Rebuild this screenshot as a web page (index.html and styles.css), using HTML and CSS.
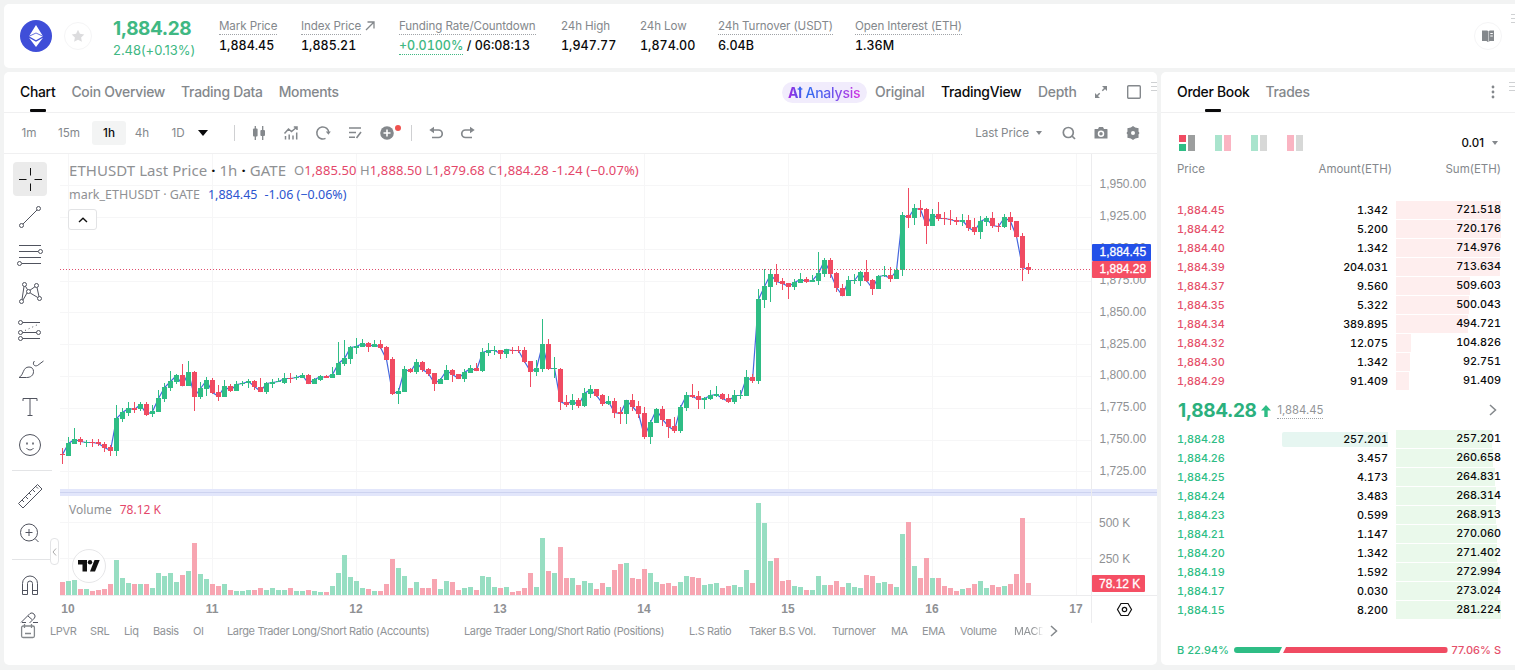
FILE: index.html
```html
<!DOCTYPE html>
<html lang="en">
<head>
  <meta charset="UTF-8">
  <meta name="viewport" content="width=device-width, initial-scale=1.0">
  <title>ETHUSDT Futures</title>
  <link rel="stylesheet" href="styles.css">
</head>
<body>

  <!-- Ticker -->
  <header class="ticker">
    <svg class="coin" viewBox="0 0 32 32"><circle cx="16" cy="16" r="16" fill="#3f4ed8"/><path d="M16 5 9 16.3l7 3.9 7-3.9zM9 17.8 16 27l7-9.2-7 3.9z" fill="#fff"/><path d="M9 16.3 16 13l7 3.3" fill="none" stroke="#3f4ed8" stroke-width=".8"/></svg>
    <div class="fav"><svg width="14" height="14" viewBox="0 0 14 14"><path d="m7 .8 1.9 4 4.4.6-3.200 3 .8 4.400L7 10.700l-3.900 2.100.8-4.400-3.200-3 4.400-.6z" fill="#dcdcde"/></svg></div>
    <div class="last">
      <div class="last-price">1,884.28</div>
      <div class="last-change">2.48(+0.13%)</div>
    </div>
    <div class="stats">
      <div class="stat"><span class="label hint">Mark Price</span><b>1,884.45</b></div>
      <div class="stat"><span class="label"><span class="hint">Index Price</span><svg class="arrow" width="10" height="10" viewBox="0 0 10 10"><path d="M1 9 9 1M2.500 1H9v6.500" fill="none" stroke="#84888c" stroke-width="1.300"/></svg></span><b>1,885.21</b></div>
      <div class="stat"><span class="label hint">Funding Rate/Countdown</span><b><span class="rate">+0.0100%</span> / 06:08:13</b></div>
      <div class="stat"><span class="label">24h High</span><b>1,947.77</b></div>
      <div class="stat"><span class="label">24h Low</span><b>1,874.00</b></div>
      <div class="stat"><span class="label hint">24h Turnover (USDT)</span><b>6.04B</b></div>
      <div class="stat"><span class="label hint">Open Interest (ETH)</span><b>1.36M</b></div>
    </div>
    <div class="guide"><svg width="14" height="12" viewBox="0 0 14 12"><path d="M1 .5h5q1 0 1 1V12q-.5-1-2-1H1zM8 1.500q0-1 1-1h4V11H9q-1 0-1 1z" fill="#84888c"/><path d="M7 1v11" stroke="#84888c"/><path d="M9.300 3.500h2.500M9.300 6h2.500" stroke="#fff"/></svg></div>
    <i class="grip"></i>
  </header>

  <main class="workspace">
    <!-- Chart -->
    <section class="card chart-card">
      <nav class="tabs">
        <a class="tab active">Chart</a>
        <a class="tab">Coin Overview</a>
        <a class="tab">Trading Data</a>
        <a class="tab">Moments</a>
        <div class="views">
          <a class="analysis"><span><b>Ai</b> Analysis</span><svg class="spark" width="6" height="6" viewBox="0 0 6 6"><path d="M3 0 3.900 2.100 6 3 3.900 3.900 3 6 2.100 3.900 0 3 2.100 2.100z" fill="#3a68ee"/></svg></a>
          <a class="tab">Original</a>
          <a class="tab on">TradingView</a>
          <a class="tab">Depth</a>
          <svg class="expand" width="14" height="14" viewBox="0 0 14 14"><path d="M8.300 5.700l3-3M5.700 8.300l-3 3" stroke="#84888c" stroke-width="1.500"/><path d="M8 1h5v5zM6 13H1V8z" fill="#84888c"/></svg>
          <svg class="square" width="14" height="14" viewBox="0 0 14 14"><rect x=".7" y=".7" width="12.600" height="12.600" rx="1" fill="none" stroke="#84888c" stroke-width="1.400"/></svg>
        </div>
        <i class="grip"></i>
      </nav>

      <div class="toolbar">
        <div class="intervals">
          <span>1m</span><span>15m</span><span class="current">1h</span><span>4h</span><span>1D</span>
          <i class="caret"></i>
        </div>
        <i class="bar"></i>
        <div class="tool-icons">
          <svg viewBox="0 0 16 16" fill="#84888c"><path d="M4.300 1v14M11.700 1v14" stroke="#84888c" stroke-width="1.300"/><rect x="2" y="3.500" width="4.600" height="8" rx="1"/><rect x="9.400" y="5" width="4.600" height="6" rx="1"/></svg>
          <svg viewBox="0 0 16 16" fill="none" stroke="#84888c" stroke-width="1.500"><path d="M1.500 8.500 5.500 4l3 2.500L14 2M10.800 2H14v3M2.500 11v3.500M6.200 9.500v5M10 10.500v4M13.700 7.500v7"/></svg>
          <svg viewBox="0 0 16 16" fill="none" stroke="#84888c" stroke-width="1.500"><path d="M13.800 8A6 6 0 1 0 10.500 13.300"/><path d="M10.800 6.500h5l-2.400 3.300z" fill="#84888c" stroke="none"/></svg>
          <svg viewBox="0 0 16 16" fill="none" stroke="#84888c" stroke-width="1.600"><path d="M2 3h12M2 7.500h7M2 12.200h6M9.500 13l4.500-6"/></svg>
          <span class="add"><svg viewBox="0 0 16 16"><circle cx="8" cy="8" r="6.800" fill="#84888c"/><path d="M8 4.500v7M4.500 8h7" stroke="#fff" stroke-width="1.600"/></svg></span>
        </div>
        <i class="bar"></i>
        <div class="tool-icons history">
          <svg viewBox="0 0 16 16" fill="none" stroke="#84888c" stroke-width="1.700"><path d="M3 5h7.500a3.700 3.700 0 0 1 0 7.500H4"/><path d="M6 1.800v6.400L1.300 5z" fill="#84888c" stroke="none"/></svg>
          <svg viewBox="0 0 16 16" fill="none" stroke="#84888c" stroke-width="1.700"><path d="M13 5H5.500a3.700 3.700 0 0 0 0 7.500H12"/><path d="M10 1.800v6.400L14.700 5z" fill="#84888c" stroke="none"/></svg>
        </div>
        <div class="toolbar-right">
          <span>Last Price</span><i class="caret small"></i>
          <svg viewBox="0 0 16 16" fill="none" stroke="#84888c" stroke-width="1.700"><circle cx="7.300" cy="7.500" r="5"/><path d="m11 11 3 3"/></svg>
          <svg viewBox="0 0 16 16"><path d="M2 4h3l1-2h4l1 2h3q.5 0 .5.500v9H1.500v-9Q1.500 4 2 4z" fill="#84888c"/><circle cx="8" cy="8.700" r="2.500" fill="#84888c" stroke="#fff" stroke-width="1.500"/></svg>
          <svg viewBox="0 0 16 16"><path d="M8 1 10.200 2.600 13.600 3.300 13.500 6.500 14.500 8 13.500 9.500 13.600 12.700 10.200 13.400 8 15 5.800 13.400 2.400 12.700 2.500 9.500 1.500 8 2.500 6.500 2.400 3.300 5.800 2.600z" fill="#84888c"/><circle cx="8" cy="8" r="2" fill="#fff"/></svg>
        </div>
      </div>

      <div class="chart-body">
        <!-- Drawing tools -->
        <aside class="draw-tools">
          <span class="tool selected"><svg viewBox="0 0 28 28"><path d="M14.500 3v7.500M14.500 18.500V26M3 14.500h7.500M18.500 14.500H26" stroke="#111"/></svg></span>
          <span class="tool"><svg viewBox="0 0 28 28"><circle cx="5.500" cy="22.500" r="2"/><circle cx="22.500" cy="5.500" r="2"/><path d="M7 21 21 7"/></svg></span>
          <span class="tool"><svg viewBox="0 0 28 28"><path d="M3 4.500h22M3 10.500h19M3 16.500h22M6 22.500h19"/><circle cx="24.500" cy="10.500" r="2"/><circle cx="3.500" cy="22.500" r="2"/></svg></span>
          <span class="tool"><svg viewBox="0 0 28 28"><circle cx="5.500" cy="22.500" r="2"/><circle cx="8.500" cy="5.500" r="2"/><circle cx="12.500" cy="12.500" r="2"/><circle cx="20.500" cy="6.500" r="2"/><circle cx="23.500" cy="19.500" r="2"/><path d="m6 20.500 2-13M9.500 7.300l2 3.400M14 11.200l5-3.500M21 8.500l2 9M7 21l4-7M14.200 14l7.600 4.500"/></svg></span>
          <span class="tool"><svg viewBox="0 0 28 28"><circle cx="4.500" cy="5.500" r="2"/><circle cx="4.500" cy="15.500" r="2"/><circle cx="22.500" cy="15.500" r="2"/><circle cx="4.500" cy="21.500" r="2"/><path d="M6.500 5.500H24M6.500 15.500h14M6.500 21.500H24"/><path d="M9 13.500 23 7" stroke-dasharray="1 3"/></svg></span>
          <span class="tool"><svg viewBox="0 0 28 28"><path d="M3 22.500c5-2.500 3.500-10.500 10-10.500 3 0 4.500 2 4.500 4.500 0 4-3 6-7 6zM18.500 6c-2.500 2.500-.5 6 3 4.500L27.500 6"/></svg></span>
          <span class="tool"><svg viewBox="0 0 28 28"><path d="M7 8V5.500h14V8M14 5.500v17M11.500 22.500h5"/></svg></span>
          <span class="tool"><svg viewBox="0 0 28 28"><circle cx="14" cy="14" r="10.500"/><path d="M10.500 17q1 2 3.500 2t3.500-2"/><path d="M11 11.500v2M17 11.500v2" stroke-width="1.500"/></svg></span>
          <i class="rule"></i>
          <span class="tool"><svg viewBox="0 0 28 28"><path d="m2.500 21.500 19-19 4.500 4.500-19 19zM6 18l2 2M9.500 14.500l2.500 2.500M13 11l2 2M16.500 7.500 19 10M20 4.500l2 2"/></svg></span>
          <span class="tool"><svg viewBox="0 0 28 28"><circle cx="13" cy="12.500" r="8.500"/><path d="m19 18.500 3.500 3.500M13 9v7M9.500 12.500h7"/></svg></span>
          <i class="rule"></i>
          <span class="tool"><svg viewBox="0 0 28 28"><path d="M6.500 23.500V12.500a7.500 7.500 0 0 1 15 0v11h-5v-11a2.500 2.500 0 0 0-5 0v11zM6.500 19.500h5M16.500 19.500h5"/></svg></span>
          <span class="tool"><svg viewBox="0 0 28 28"><path d="m5 13.500 9-9q2-1.500 4 .5t.5 4L13 14.500M12 7l4 3.500M6 13.500h4M17 13.500h5"/></svg></span>
        </aside>

        <div class="plot">
          <svg id="chart" width="1097" height="469"></svg>
          <div class="legend">
            <div class="legend-main"><span class="symbol">ETHUSDT Last Price<i>·</i>1h<i>·</i>GATE</span><span class="ohlc">O<em>1,885.50</em> H<em>1,888.50</em> L<em>1,879.68</em> C<em>1,884.28</em> <em>-1.24 (−0.07%)</em></span></div>
            <div class="legend-sub">mark_ETHUSDT · GATE<em>1,884.45</em><em>-1.06 (−0.06%)</em></div>
            <span class="collapse"><svg width="12" height="12" viewBox="0 0 12 12"><path d="m2 8 4-3.700L10 8" fill="none" stroke="#111" stroke-width="1.400"/></svg></span>
          </div>
          <div class="legend-volume">Volume<em>78.12 K</em></div>
          <div class="tv-logo"><svg width="22" height="12" viewBox="0 0 22 12" fill="#111"><path d="M0 0h9v11.500H4.500V4.500H0z"/><circle cx="12" cy="2.300" r="2.200"/><path d="M16.500 0h5.200L17 11.500h-5z"/></svg></div>
          <span class="side-toggle"><svg width="5" height="8" viewBox="0 0 5 8"><path d="M4 .5 1 4l3 3.500" fill="none" stroke="#aaa"/></svg></span>
        </div>
      </div>

      <footer class="indicators">
        <svg class="calendar" width="16" height="16" viewBox="0 0 16 16" fill="none" stroke="#84888c" stroke-width="1.300"><rect x="1.600" y="3" width="12.800" height="11.500" rx="1.500"/><path d="M4.500 1v4M11.500 1v4M5 10.500h6"/></svg>
        <span>LPVR</span><span>SRL</span><span>Liq</span><span>Basis</span><span>OI</span>
        <span>Large Trader Long/Short Ratio (Accounts)</span>
        <span>Large Trader Long/Short Ratio (Positions)</span>
        <span>L.S Ratio</span><span>Taker B.S Vol.</span><span>Turnover</span><span>MA</span><span>EMA</span><span>Volume</span><span class="fade">MACD</span>
        <svg width="8" height="12" viewBox="0 0 8 12"><path d="m1 1 5.500 5L1 11" fill="none" stroke="#84888c" stroke-width="1.500"/></svg>
      </footer>
    </section>

    <!-- Order book -->
    <section class="card book">
      <nav class="tabs">
        <a class="tab active">Order Book</a>
        <a class="tab">Trades</a>
        <svg class="more" width="4" height="14" viewBox="0 0 4 14" fill="#84888c"><circle cx="2" cy="2" r="1.400"/><circle cx="2" cy="7" r="1.400"/><circle cx="2" cy="12" r="1.400"/></svg>
        <i class="grip"></i>
      </nav>
      <div class="book-modes">
        <i class="mode both"></i><i class="mode split"></i><i class="mode bids-only"></i><i class="mode asks-only"></i>
        <span class="step">0.01<i class="caret small"></i></span>
      </div>
      <div class="book-head"><span>Price</span><span>Amount(ETH)</span><span>Sum(ETH)</span></div>
      <div class="rows asks" id="asks"></div>
      <div class="mid">
        <strong>1,884.28</strong>
        <svg width="10" height="12" viewBox="0 0 10 12"><path d="M5 0 10 5.500H6.700V12H3.300V5.500H0z" fill="#2ebd85"/></svg>
        <span>1,884.45</span>
        <svg class="go" width="8" height="12" viewBox="0 0 8 12"><path d="m1 1 5.500 5L1 11" fill="none" stroke="#84888c" stroke-width="1.500"/></svg>
      </div>
      <div class="rows bids" id="bids"></div>
      <div class="ratio"><span class="up">B 22.94%</span><i class="buy"></i><i class="sell"></i><span class="down">77.06% S</span></div>
    </section>
  </main>

  <script src="chart.js"></script>
</body>
</html>
```
FILE: styles.css
```css
* {
  box-sizing: border-box;
}

body {
  margin: 0;
  height: 670px;
  overflow: hidden;
  background: #f2f3f3;
  color: #0a0a0b;
  font-family: Inter, "Liberation Sans", sans-serif;
  font-size: 12px;
}

i, em {
  font-style: normal;
}

svg {
  display: block;
  flex: none;
}

/* Ticker */
.ticker {
  position: relative;
  display: flex;
  align-items: center;
  height: 64px;
  margin: 4px 0 4px 4px;
  padding-left: 16px;
  background: #fff;
  border-radius: 5px 0 0 5px;
}

.coin {
  width: 32px;
  height: 32px;
}

.fav, .guide {
  display: flex;
  align-items: center;
  justify-content: center;
  width: 28px;
  height: 28px;
  border: 1px solid #f5f5f6;
  border-radius: 50%;
}

.fav {
  margin-left: 12px;
}

.guide {
  margin-left: auto;
  margin-right: 13px;
}

.last {
  width: 106px;
  margin: 5px 0 0 21px;
  color: #40b883;
}

.last-price {
  font-size: 19px;
  font-weight: 700;
  line-height: 22px;
  letter-spacing: -0.42px;
}

.last-change {
  font-size: 13px;
  line-height: 20px;
  letter-spacing: -0.05px;
}

.stats {
  display: grid;
  grid-template-columns: 82px 98px 162px 79px 78px 137px 120px;
}

.stat {
  display: flex;
  flex-direction: column;
  align-items: flex-start;
  height: 40px;
}

.stat .label {
  display: flex;
  height: 19px;
  color: #84888c;
  font-size: 11.600px;
  line-height: 20px;
  letter-spacing: -0.1px;
  white-space: nowrap;
}

.stat .hint {
  height: 19px;
  border-bottom: 1px dotted #a0a3a7;
}

.stat b {
  font-size: 12.500px;
  font-weight: 500;
  line-height: 22px;
  font-variant-numeric: tabular-nums;
  white-space: nowrap;
}

.rate {
  display: inline-block;
  height: 19px;
  line-height: 20px;
  color: #40b883;
  border-bottom: 1px dotted #40b883;
}

.arrow {
  margin: 5px 0 0 4px;
}

.grip {
  position: absolute;
  top: 10px;
  right: 0;
  width: 6px;
  height: 10px;
  background: repeating-linear-gradient(#cfd1d3 0 1px, transparent 1px 4px);
}

.ticker .grip {
  width: 4px;
}

/* Cards */
.workspace {
  display: grid;
  grid-template-columns: 1153px 354px;
  gap: 4px;
  margin-left: 4px;
}

.card {
  height: 593px;
  overflow: hidden;
  background: #fff;
  border-radius: 5px;
}

.book {
  border-radius: 5px 0 0 5px;
}

.tabs {
  position: relative;
  display: flex;
  align-items: center;
  gap: 16px;
  height: 41px;
  padding-left: 16px;
  border-bottom: 1px solid #f0f0f1;
}

.tab {
  position: relative;
  color: #84888c;
  font-size: 13.900px;
  font-weight: 500;
  line-height: 18px;
  letter-spacing: -0.27px;
  white-space: nowrap;
}

.tab.active, .tab.on {
  color: #0a0a0b;
}

.tab.active::after {
  content: "";
  position: absolute;
  left: 50%;
  bottom: -11px;
  width: 16px;
  height: 3px;
  margin-left: -8px;
  border-radius: 1px;
  background: #0a0a0b;
}

.views {
  display: grid;
  grid-template-columns: 93px 66px 97px 56px 33px 14px;
  align-items: center;
  margin-left: auto;
  margin-right: 16px;
}

.analysis {
  position: relative;
  width: 85px;
  height: 21px;
  padding-left: 6px;
  border-radius: 11px;
  background: #f1ecfc;
  font-size: 14px;
  font-weight: 500;
  line-height: 21px;
  letter-spacing: -0.2px;
  white-space: nowrap;
}

.analysis span {
  background: linear-gradient(90deg, #a426e0, #2f6bf0 25%, #5a5cee 55%, #d42fe0);
  -webkit-background-clip: text;
  background-clip: text;
  color: transparent;
}

.spark {
  position: absolute;
  top: 4px;
  left: 15px;
}

/* Toolbar */
.toolbar {
  display: flex;
  align-items: center;
  height: 41px;
  border-bottom: 1px solid #f0f0f1;
  color: #84888c;
  font-size: 11.700px;
}

.intervals {
  display: grid;
  grid-template-columns: 40px 40px 33px 36px 37px 10px;
  align-items: center;
  width: 219px;
  margin-left: 8px;
}

.intervals span {
  width: 34px;
  line-height: 24px;
  text-align: center;
}

.intervals .current {
  border-radius: 3px;
  background: #f3f4f4;
  color: #0a0a0b;
  font-weight: 500;
}

.caret {
  width: 0;
  border: 5px solid transparent;
  border-top: 6px solid #0a0a0b;
  border-bottom: 0;
}

.caret.small {
  border-width: 4px 3px 0;
  border-top-color: #84888c;
}

.bar {
  width: 1px;
  height: 16px;
  margin-left: 3px;
  background: #cfd0d2;
}

.tool-icons {
  display: flex;
  gap: 16px;
  width: 173px;
  padding-left: 16px;
}

.tool-icons svg, .toolbar-right svg {
  width: 16px;
  height: 16px;
}

.add {
  position: relative;
}

.add::after {
  content: "";
  position: absolute;
  top: 0;
  right: -6px;
  width: 6px;
  height: 6px;
  border-radius: 50%;
  background: #f0524f;
}

.tool-icons.history {
  width: auto;
}

.toolbar-right {
  display: flex;
  align-items: center;
  gap: 16px;
  margin-left: auto;
  margin-right: 16px;
  letter-spacing: -0.1px;
}

.toolbar-right .caret {
  margin: 0 3px 0 -9px;
}

/* Chart */
.chart-body {
  display: flex;
  height: 469px;
}

.draw-tools {
  width: 56px;
  padding-top: 6px;
  overflow: hidden;
}

.tool {
  display: flex;
  align-items: center;
  justify-content: center;
  width: 34px;
  height: 34px;
  margin: 2px 9px 4px;
  border-radius: 4px;
}

.tool svg {
  width: 28px;
  height: 28px;
  fill: none;
  stroke: #50535e;
}

.tool.selected {
  background: #ebebeb;
}

.rule {
  display: block;
  height: 1px;
  margin: 8px;
  background: #e3e4e6;
}

.plot {
  position: relative;
  width: 1097px;
  font-family: "Noto Sans", "Liberation Sans", sans-serif;
  color: #8f9194;
}

.legend {
  position: absolute;
  top: 5px;
  left: 8px;
}

.legend-main {
  display: flex;
  align-items: center;
  height: 22px;
  padding-left: 1px;
  white-space: nowrap;
}

.symbol {
  width: 225px;
  font-size: 15px;
  letter-spacing: 0.05px;
}

.symbol i {
  margin: 0 4px;
  color: #111;
  font-weight: 700;
}

.ohlc {
  font-size: 13px;
  letter-spacing: 0.09px;
}

.ohlc em, .legend-volume em {
  color: #e4476a;
}

.legend-sub {
  margin-top: 3px;
  padding-left: 1px;
  font-size: 12.500px;
  line-height: 22px;
  white-space: nowrap;
}

.legend-sub em {
  margin-left: 8px;
  color: #2b55cf;
}

.legend-sub em + em {
  margin-left: 7px;
}

.collapse {
  display: flex;
  align-items: center;
  justify-content: center;
  width: 29px;
  height: 21px;
  margin-top: 3px;
  border: 1px solid #e2e3e5;
  border-radius: 3px;
  background: #fff;
}

.legend-volume {
  position: absolute;
  top: 346px;
  left: 9px;
  font-size: 12px;
  line-height: 20px;
}

.legend-volume em {
  margin-left: 8px;
}

.tv-logo {
  position: absolute;
  top: 395px;
  left: 12px;
  display: flex;
  align-items: center;
  justify-content: center;
  width: 34px;
  height: 34px;
  border: 1px solid #e6e6e8;
  border-radius: 50%;
  background: #fff;
}

.side-toggle {
  position: absolute;
  top: 384px;
  left: -10px;
  display: flex;
  align-items: center;
  justify-content: center;
  width: 9px;
  height: 27px;
  border: 1px solid #e3e4e6;
  border-radius: 4px;
  background: #fff;
}

.grid {
  stroke: #f6f6f7;
}

.axis-line {
  stroke: #ececee;
}

.axis-text {
  fill: #8f9194;
  font: 12px "Liberation Sans", sans-serif;
}

.day {
  font-weight: 700;
  text-anchor: middle;
}

.tag-text {
  fill: #fff;
  font: 12px "Liberation Sans", sans-serif;
  stroke: #fff;
  stroke-width: 0.3px;
}

.up-fill { fill: #2ebd85; }
.down-fill { fill: #f04b62; }
.up-vol { fill: #97dec2; }
.down-vol { fill: #f7a5b1; }

.mark-line {
  fill: none;
  stroke: #4667dd;
  stroke-width: 1.200;
}

.last-line {
  stroke: #e0506f;
  stroke-dasharray: 1 2;
}

/* Indicators */
.indicators {
  display: grid;
  grid-template-columns: 30px 40px 34px 29px 40px 34px 237px 225px 60px 83px 59px 31px 38px 54px 36px 8px;
  align-items: center;
  height: 17px;
  margin-top: -1px;
  padding-left: 16px;
  color: #919497;
  font-size: 11px;
  letter-spacing: -0.37px;
  white-space: nowrap;
}

.fade {
  width: 32px;
  overflow: hidden;
  -webkit-mask-image: linear-gradient(90deg, #000 60%, transparent 92%);
  mask-image: linear-gradient(90deg, #000 60%, transparent 92%);
}

/* Order book */
.more {
  margin-left: auto;
  margin-right: 20px;
}

.book-modes {
  display: flex;
  align-items: center;
  gap: 20px;
  height: 20px;
  margin-top: 20px;
  padding: 0 17px 0 18px;
}

.mode {
  width: 16px;
  height: 16px;
}

.both {
  background:
    linear-gradient(#f04b62, #f04b62) 0 0 / 7px 7px no-repeat,
    linear-gradient(#2ebd85, #2ebd85) 0 9px / 7px 7px no-repeat,
    linear-gradient(#9c9e9e, #9c9e9e) 9px 0 / 7px 16px no-repeat;
}

.split { background: linear-gradient(90deg, #a9e4cd 0 7px, #fff 7px 9px, #fab4c2 9px); }
.bids-only { background: linear-gradient(90deg, #a9e4cd 0 7px, #fff 7px 9px, #d7d8d7 9px); }
.asks-only { background: linear-gradient(90deg, #fab4c2 0 7px, #fff 7px 9px, #d7d8d7 9px); }

.step {
  display: flex;
  align-items: center;
  gap: 8px;
  margin-left: auto;
  font-size: 11.500px;
  font-weight: 500;
}

.book-head {
  display: grid;
  grid-template-columns: 107px 108px 109px;
  height: 32px;
  padding-left: 16px;
  color: #84888c;
  font-size: 11.500px;
  line-height: 32px;
}

.book-head span + span {
  text-align: right;
}

.rows {
  padding-left: 16px;
  font-variant-numeric: tabular-nums;
}

.asks {
  margin-top: 16px;
  color: #e5506b;
}

.bids {
  color: #2ebd85;
}

.row {
  display: grid;
  grid-template-columns: 105px 106px 8px 105px;
  height: 19px;
  font-size: 10.800px;
  font-weight: 500;
  line-height: 19px;
}

.amount, .sum {
  color: #0a0a0b;
  text-align: right;
}

.amount {
  height: 15px;
  margin-top: 2px;
  line-height: 15px;
}

.amount.flash {
  border-radius: 2px 0 0 2px;
  background: #e6f6f1;
}

.sum {
  position: relative;
  grid-column: 4;
  height: 18px;
  line-height: 17px;
}

.sum i {
  position: absolute;
  top: 0;
  left: 0;
  height: 18px;
  background: #feeeee;
}

.bids .sum i {
  background: #eaf9eb;
}

.sum span {
  position: relative;
}

.mid {
  display: flex;
  align-items: center;
  height: 39px;
  padding: 0 18px 0 17px;
}

.mid strong {
  margin-right: 5px;
  color: #2bb07d;
  font-size: 19px;
  letter-spacing: -0.4px;
}

.mid span {
  height: 16px;
  margin-left: 6px;
  border-bottom: 1px dotted #a0a3a7;
  color: #919497;
  font-size: 11.300px;
}

.mid .go {
  margin: -2px 0 0 auto;
}

.ratio {
  display: flex;
  align-items: center;
  height: 20px;
  margin-top: 20px;
  padding: 0 14px 0 16px;
  font-size: 11px;
  font-weight: 500;
}

.ratio i {
  height: 6px;
}

.ratio .buy {
  width: 48px;
  margin-left: 5px;
  border-radius: 3px 0 0 3px;
  background: #2ebd85;
  clip-path: polygon(0 0, 100% 0, 94% 100%, 0 100%);
}

.ratio .sell {
  flex: 1;
  margin: 0 4px 0 1px;
  border-radius: 0 3px 3px 0;
  background: #f04b62;
  clip-path: polygon(3px 0, 100% 0, 100% 100%, 0 100%);
}

.up { color: #2ebd85; }
.down { color: #e5506b; }
```
FILE: chart.js
```js
// Candles: direction, high, body top, body bottom, low (1/3 px steps from base)
const series = [
  { base: 1, rows: `
r 880 896 899 927|g 846 864 902 902|g 819 852 866 866|r 846 852 862 869|g 855 861 864 875|r 852 861 864 877
r 852 862 866 872|r 861 867 879 890|r 870 876 887 903|g 750 789 887 903|g 759 771 792 800|g 741 758 773 783
r 741 760 765 775|g 741 747 762 768|r 741 747 779 783|g 750 768 776 785|g 705 729 770 770|g 684 696 731 740
g 648 677 698 707|g 656 660 681 687|r 627 660 692 692|g 618 651 692 692|r 648 651 725 768|g 680 699 725 731
g 666 675 701 722|r 669 675 713 716|r 690 711 725 738|g 675 693 725 725|r 687 693 707 710|g 678 687 707 708
g 678 683 687 692|g 672 678 684 698|r 676 678 696 705|r 669 695 710 712|g 680 684 710 716|g 672 680 686 698
g 668 679 682 682|g 654 668 683 686|r 654 668 671 683|g 660 666 669 675|g 654 660 668 668|r 656 660 686 687
g 668 672 686 686|g 659 663 675 678|r 660 663 668 670|g 636 656 668 668|g 561 624 659 660|g 555 609 627 632` },
  { base: 146, rows: `
g 138 141 177 192|g 114 138 144 162|g 117 129 141 141|r 126 128 141 156|g 120 131 140 141|r 120 132 143 146
r 137 140 180 180|r 171 177 282 285|g 264 273 282 312|g 198 206 275 275|r 203 206 216 219|g 177 186 216 222
r 183 185 210 216|r 204 207 221 228|r 219 219 252 273|g 233 236 251 252|g 195 210 240 240|r 207 210 225 246
r 222 222 237 237|g 207 215 237 246|g 195 204 219 219|r 189 204 213 213|g 144 156 213 216|g 129 150 159 167
g 138 149 152 165|r 150 150 162 177|g 147 148 162 173|r 141 149 152 161|r 138 149 152 159|r 141 150 186 189
r 183 183 216 261|g 180 204 216 228|g 57 132 207 216|r 117 132 207 210|g 171 204 207 234|r 204 207 306 330
r 285 306 315 321|g 282 300 315 330|r 294 300 318 324|g 264 279 318 321|g 255 267 282 294|r 267 267 288 291
r 282 285 312 318|g 288 303 312 315|r 294 303 339 354|r 321 336 342 372|g 300 300 342 372|r 282 300 321 333
r 303 318 342 354|r 321 339 411 417|g 360 366 411 432|g 324 327 369 369` },
  { base: 86, rows: `
r 498 507 540 558|r 537 537 561 594|r 531 558 573 579|g 496 501 573 579|g 456 465 504 513|r 432 465 470 474
r 453 468 480 507|g 471 474 480 507|g 450 464 477 480|g 438 462 468 471|r 459 462 477 480|r 462 475 486 489
g 450 465 486 492|g 450 464 467 477|g 390 411 468 468|r 402 411 423 429|g 147 177 423 432|g 87 138 180 204
g 87 102 141 186|r 72 102 126 135|r 114 123 132 150|r 129 129 141 177|g 117 126 141 150|g 99 117 129 129
r 111 118 125 129|g 105 120 126 126|g 36 99 123 135|g 54 60 102 111|r 54 60 102 114|r 96 99 144 156
r 132 144 168 168|g 108 120 168 168|g 102 119 122 132|g 93 96 123 138|r 60 96 123 126|r 117 120 147 165
g 105 108 147 147|g 78 104 107 111|r 81 105 117 126|g 84 90 117 117` },
  { base: 6, rows: `
g 156 165 330 348|r 84 165 174 204|g 132 144 174 195|r 120 144 150 171|r 144 147 198 252|g 147 162 198 198
r 126 162 177 183|r 156 175 178 195|r 150 176 179 195|r 171 180 186 195|g 162 180 186 198|r 165 180 204 213
r 174 201 216 225|g 168 183 216 237|g 168 174 186 198|r 156 174 198 204|r 189 197 200 216|g 162 171 200 204
r 156 171 186 210|r 183 183 231 234|r 219 228 324 363|r 309 321 330 342` }
];

const volumes = [
  13, 14, 15, 6, 6, 4, 5, 6, 11, 35, 17, 12, 11, 11, 11, 7, 22, 19, 22, 13, 20, 24, 52, 21, 16, 11, 9, 11, 5, 4,
  4, 5, 5, 7, 5, 7, 5, 5, 7, 4, 4, 5, 4, 3, 3, 9, 22, 40, 18, 14, 7, 6, 4, 4, 11, 36, 27, 19, 7, 13,
  7, 7, 16, 6, 14, 13, 5, 7, 8, 5, 19, 18, 8, 7, 8, 3, 4, 7, 22, 8, 57, 24, 22, 48, 17, 17, 10, 14, 12, 6,
  12, 8, 25, 31, 32, 17, 16, 26, 22, 13, 11, 12, 9, 13, 19, 18, 17, 10, 11, 12, 7, 9, 10, 8, 25, 12, 92, 72, 34, 37,
  14, 15, 9, 8, 5, 5, 19, 10, 10, 14, 8, 12, 8, 7, 20, 19, 12, 13, 11, 8, 61, 73, 29, 17, 37, 17, 17, 9, 7, 4,
  6, 7, 11, 14, 7, 10, 8, 9, 11, 21, 77, 12
];

const candles = series.flatMap(({ base, rows }) =>
  rows.trim().split(/[|\n]/).map(row => {
    const [dir, ...v] = row.split(' ');
    const [high, top, bottom, low] = v.map(n => Math.round(base + n / 3));
    return { up: dir === 'g', high, top, bottom, low };
  })
);

function drawChart() {
  const out = [];
  const line = (cls, x1, y1, x2, y2) => out.push(`<line class="${cls}" x1="${x1}" y1="${y1}" x2="${x2}" y2="${y2}"/>`);
  const rect = (cls, x, y, w, h) => out.push(`<rect class="${cls}" x="${x}" y="${y}" width="${w}" height="${h}"/>`);
  const text = (cls, x, y, s) => out.push(`<text class="${cls}" x="${x}" y="${y}">${s}</text>`);

  // Grid
  [31, 63, 95, 127, 158, 190, 222, 254, 286, 317, 368, 404].forEach(y => line('grid', 0, y + 0.5, 1031, y + 0.5));
  for (let d = 0; d < 8; d++) {
    line('grid', 8.5 + d * 144, 0, 8.5 + d * 144, 441);
    text('axis-text day', 8 + d * 144, 459, 10 + d);
  }

  // Pane separator
  out.push('<rect x="0" y="335" width="1097" height="7" fill="#e2e6fb"/><rect x="0" y="338" width="1097" height="1" fill="#cdd3f0"/>');

  // Volume
  candles.forEach((c, i) => rect(c.up ? 'up-vol' : 'down-vol', i * 6, 441 - volumes[i], 5, volumes[i]));

  // Mark price runs through the closes, under the candles
  const closes = candles.map((c, i) => `${2.5 + i * 6},${c.up ? c.top + 0.5 : c.bottom - 0.5}`);
  out.push(`<polyline class="mark-line" points="${closes.join(' ')}"/>`);

  candles.forEach((c, i) => {
    const cls = c.up ? 'up-fill' : 'down-fill';
    rect(cls, i * 6 + 2, c.high, 1, c.low - c.high);
    rect(cls, i * 6, c.top, 5, Math.max(1, c.bottom - c.top));
  });
  line('last-line', 0, 115.5, 1031, 115.5);

  // Axes
  line('axis-line', 1031.5, 0, 1031.5, 469);
  line('axis-line', 0, 441.5, 1097, 441.5);
  ['1,950.00', '1,925.00', '1,900.00', '1,875.00', '1,850.00', '1,825.00', '1,800.00', '1,775.00', '1,750.00', '1,725.00']
    .forEach((p, i) => text('axis-text', 1039.5, Math.round(34.35 + i * 31.85), p));
  text('axis-text', 1039, 373, '500 K');
  text('axis-text', 1039, 409, '250 K');

  out.push('<rect x="1032" y="90" width="59" height="17" rx="1" fill="#2350e8"/><rect x="1032" y="107" width="59" height="17" rx="1" fill="#f54f64"/><rect x="1032" y="421" width="53" height="17" rx="1" fill="#f54f64"/>');
  text('tag-text', 1039.5, 102, '1,884.45');
  text('tag-text', 1039.5, 119, '1,884.28');
  text('tag-text', 1039, 434, '78.12 K');

  // Axis settings
  out.push('<path d="M1061 449.500h7l3.500 6-3.500 6h-7l-3.500-6z" fill="none" stroke="#111" stroke-width="1.200"/><circle cx="1064.500" cy="455.500" r="2.200" fill="none" stroke="#111" stroke-width="1.200"/>');

  document.getElementById('chart').innerHTML = out.join('');
}

const asks = [
  ['1,884.45', '1.342', '721.518'], ['1,884.42', '5.200', '720.176'], ['1,884.40', '1.342', '714.976'],
  ['1,884.39', '204.031', '713.634'], ['1,884.37', '9.560', '509.603'], ['1,884.35', '5.322', '500.043'],
  ['1,884.34', '389.895', '494.721'], ['1,884.32', '12.075', '104.826'], ['1,884.30', '1.342', '92.751'],
  ['1,884.29', '91.409', '91.409']
];

const bids = [
  ['1,884.28', '257.201', '257.201'], ['1,884.26', '3.457', '260.658'], ['1,884.25', '4.173', '264.831'],
  ['1,884.24', '3.483', '268.314'], ['1,884.23', '0.599', '268.913'], ['1,884.21', '1.147', '270.060'],
  ['1,884.20', '1.342', '271.402'], ['1,884.19', '1.592', '272.994'], ['1,884.17', '0.030', '273.024'],
  ['1,884.15', '8.200', '281.224']
];

function renderRows(id, rows) {
  const max = Math.max(...rows.map(r => +r[2]));
  document.getElementById(id).innerHTML = rows.map(([price, amount, sum], i) => `
    <div class="row">
      <span>${price}</span>
      <span class="amount${id === 'bids' && i === 0 ? ' flash' : ''}">${amount}</span>
      <span class="sum"><i style="width: ${(sum / max * 100).toFixed(1)}%"></i><span>${sum}</span></span>
    </div>`).join('');
}

drawChart();
renderRows('asks', asks);
renderRows('bids', bids);
```
